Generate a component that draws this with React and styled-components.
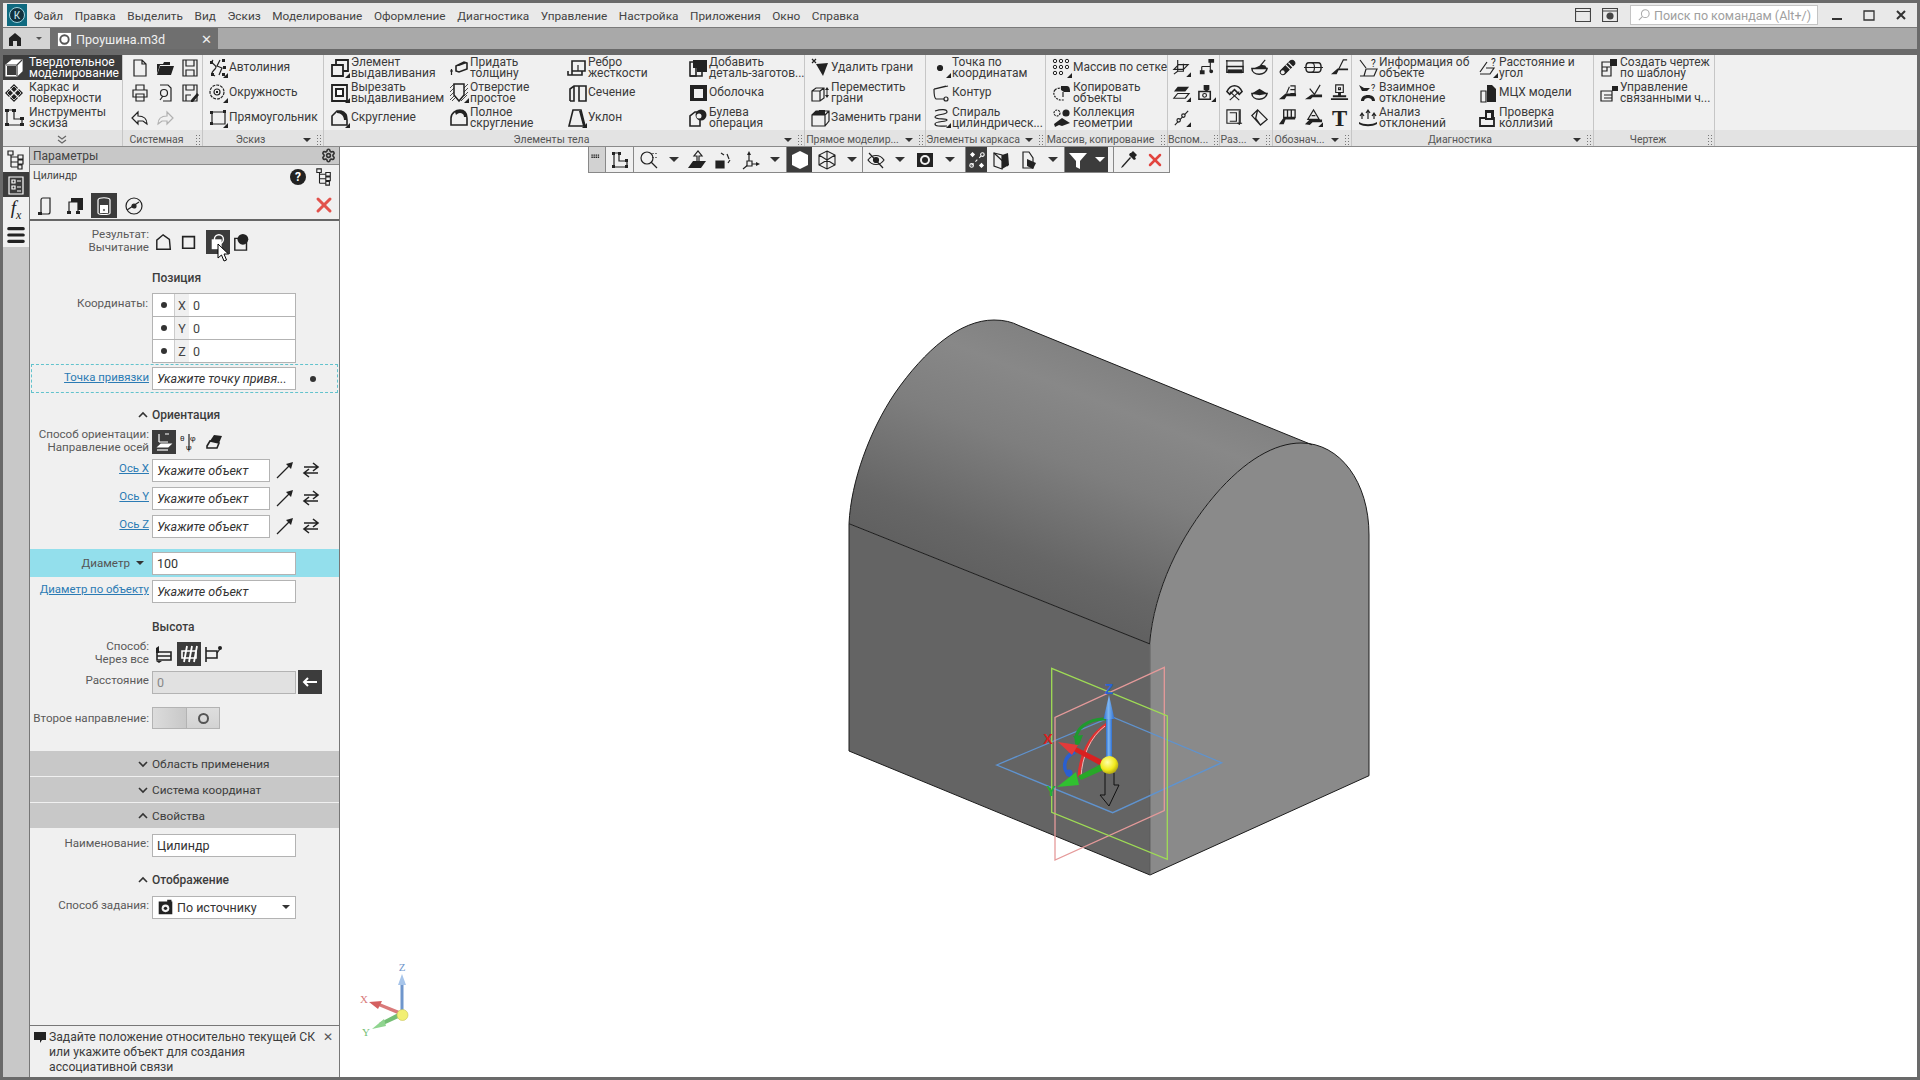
import React from "react";
import styled, { createGlobalStyle } from "styled-components";
import { Settings, X as XIcon } from "lucide-react";

const Global = createGlobalStyle`
  html, body { margin: 0; padding: 0; height: 100%; overflow: hidden; }
  body { font-family: Roboto, "Noto Sans", sans-serif; color: #333; }
`;

// --- icon pieces, everything lives in a 20x20 box
const F = ({ d }) => <path d={d} fill="currentColor" stroke="none" />;
const L = ({ d }) => <path d={d} />;
const C = () => <path d="M20 15v5h-5z" fill="currentColor" stroke="none" />;

const shapes = {
  cube: <><path d="M2 7l6-5h10v11l-5 5H2z" fill="#fff" stroke="#fff" /><path d="M2 7h11v11M13 7l5-5" stroke="#3c3c3c" /><path d="M3 8h9v9H3z" fill="#3c3c3c" stroke="none" /></>,
  frame: <><F d="M10 1l4 4-4 4-4-4zM5 6l4 4-4 4-4-4zM15 6l4 4-4 4-4-4zM10 11l4 4-4 4-4-4z" /><path d="M3 10l7-7 7 7-7 7z" stroke="#fff" strokeWidth=".7" /></>,
  sketchTools: <><L d="M3 2v15h15v-6h-8V2z" /><F d="M1 1h4v3H1zM8 1h4v3H8zM16 9h4v3h-4zM16 15h4v3h-4zM1 15h4v3H1z" /></>,
  doc: <L d="M4 2h8l4 4v12H4zM12 2v4h4" />,
  folder: <><F d="M2 6h6l1-2h6v3H5L2 16z" /><F d="M5 8h14l-3 9H2z" /></>,
  save: <><L d="M3 2h14v16H3zM6 2v6h8V2M6 18v-6h8v6" /></>,
  print: <L d="M6 7V2h8v5M3 7h14v7H3zM6 11h8v7H6z" />,
  preview: <><L d="M5 17l3-4M5 2h8l3 3v13H8" /><circle cx="9" cy="10" r="3.5" /></>,
  saveAs: <><L d="M3 2h14v16H3zM6 2v5h8V2M6 18v-6h5" /><F d="M11 17l6-7 2 2-6 7h-2z" /></>,
  undo: <L d="M8 4L2 10l6 6v-3h5l4 3c0-5-3-8-9-8z" />,
  redo: <g opacity=".3"><L d="M12 4l6 6-6 6v-3H7l-4 3c0-5 3-8 9-8z" /></g>,
  autoline: <><L d="M5 2c-4 4 6 5 2 9s-4 5 0 7M12 2l-3 6 5 2-3 7" /><F d="M2 3h3v3H2zM14 1h3v3h-3zM3 15h3v3H3zM15 8h3v3h-3zM14 15h3v3h-3z" /><C /></>,
  circle: <><circle cx="9" cy="9" r="7" strokeDasharray="3 1" /><circle cx="9" cy="9" r="3" /><F d="M8 8h2v2H8z" /><C /></>,
  rect: <><L d="M4 4h13v12H4z" /><F d="M2 3h3v3H2zM15 2h3v3h-3zM2 14h3v3H2z" /><C /></>,
  extrude: <><path d="M2 7h11v11H2z" strokeWidth="1.8" /><path d="M6 7V2h12v11h-5" strokeWidth="1.8" /><C /></>,
  cut: <><path d="M2 2h15v16H2z" strokeWidth="1.8" /><F d="M5 5h9v9H5z" /><path d="M7 7h5v5H7z" fill="#fff" stroke="none" /><C /></>,
  fillet: <><path d="M2 17V8l5-5h4c4 1 6 5 6 9v5z" strokeWidth="1.6" /><F d="M7 3h4c4 1 6 5 6 9h-3c0-4-3-7-7-7z" /><C /></>,
  thicken: <><L d="M1 13h3M2.500 11v6" /><path d="M7 8l8-4 3 1v6l-8 3-3-1z" strokeWidth="1.6" /><F d="M7 8l8-4 3 1-8 3z" /></>,
  hole: <><g strokeWidth=".8"><L d="M1 5l4-4M1 9l4-4M1 13l4-4M1 17l5-5M3 18l4-4M15 5l4-4M15 9l4-4M15 13l4-4M12 18l6-6" /></g><path d="M5 1h10v11l-5 6-5-6z" fill="#f0f0f0" strokeWidth="1.500" /><C /></>,
  fullFillet: <><path d="M2 17v-7c0-5 5-8 9-8 4 0 7 3 7 8v7z" strokeWidth="1.6" /><F d="M6 4c2-2 4-2 6-2 3 0 6 3 6 7h-3c0-3-2-4-4-4-2 0-3 1-4 2z" /></>,
  rib: <><path d="M5 3h13v10H5zM5 3v14H1V13M2 17h13v-4" strokeWidth="1.6" /><L d="M11 7v6" /></>,
  section: <path d="M3 18V6l4-3h12v15h-7V3M7 3v15H3" strokeWidth="1.6" />,
  draft: <><path d="M2 18L6 2h8l4 16z" strokeWidth="1.6" /><F d="M12 3h2l4 15h-2z" /><C /></>,
  addPart: <><path d="M2 18V4h6v14z" strokeWidth="1.6" /><F d="M5 2h14v12H9v-4H5z" /><path d="M2 18h12v-4" strokeWidth="1.6" /></>,
  shell: <><F d="M2 2h17v16H2z" /><path d="M6 6h9v9H6z" fill="#f0f0f0" stroke="none" /></>,
  bool: <><path d="M2 18V8l5-4h5v14z" strokeWidth="1.6" /><circle cx="13" cy="7" r="5.500" fill="currentColor" stroke="none" /><circle cx="11" cy="8" r="2.500" fill="#f0f0f0" stroke="none" /></>,
  delFace: <><F d="M6 6l12-1-5 13z" /><L d="M2 1l4 4M6 1L2 5" /></>,
  moveFace: <><path d="M2 8l4-3h8v10l-4 3H2zM2 8h8v10M10 8l4-3" /><F d="M17 4l2 3h-4zM17 15l-2-3h4zM16.500 7h1v5h-1z" /></>,
  replaceFace: <><path d="M2 7h13v11H2zM2 7l4-4h13v10l-4 5M15 7l4-4" /><F d="M2 7l4-4h4v4zM9 2h6v5H9z" /></>,
  point: <><circle cx="9" cy="10" r="2.500" fill="currentColor" /><C /></>,
  contour: <><L d="M3 6l12-3M3 6c0 4 0 9 2 10h8M4 6l13-3" /><circle cx="15" cy="16" r="2" /></>,
  spiral: <><L d="M4 3c6-2 12-2 12 1S4 6 4 9s12 1 12 3-12 1-12 4 8 2 12 2" strokeWidth="1.5" /><C /></>,
  grid: <><g strokeWidth="1"><circle cx="3" cy="3" r="1.700" /><circle cx="9" cy="3" r="1.700" /><circle cx="15" cy="3" r="1.700" /><circle cx="3" cy="9" r="1.700" /><circle cx="9" cy="9" r="1.700" /><circle cx="15" cy="9" r="1.700" /><circle cx="3" cy="15" r="1.700" /><circle cx="9" cy="15" r="1.700" /></g><C /></>,
  copyObj: <><path d="M3 7c-3 3 0 9 5 10h4M3 7c2-2 5-2 6-2" strokeDasharray="2 1" /><F d="M9 3h6c3 0 3 4 3 6h-6l-3-2z" /><L d="M11 9v5" /></>,
  collect: <><circle cx="5" cy="5" r="3" strokeDasharray="2 1" /><circle cx="14" cy="5" r="3" fill="currentColor" /><F d="M2 16l8-6 8 5-8 3-3-1-4 2z" /></>,
  plane: <><L d="M2 12l5-5h10l-5 5zM6 2v12h6V6M2 17l4-3" /><C /></>,
  sym: <><L d="M14 4v10M5 9h9M5 9v5" /><F d="M12 1h6v4h-6zM3 13h5v4H3zM13 14a2 2 0 104 0 2 2 0 10-4 0" /></>,
  plane2: <><F d="M6 4h12l-4 5H2z" /><L d="M2 16l4-5h12l-4 5z" /><C /></>,
  sym2: <><path d="M2 9h12v8H2z" strokeWidth="1.6" /><circle cx="8" cy="13" r="2" /><F d="M7 2h6v5l-3 2-3-2z" /><C /></>,
  axis: <><L d="M3 18L17 3" /><circle cx="7" cy="13" r="1.800" fill="#f0f0f0" /><circle cx="12" cy="8" r="1.800" fill="#f0f0f0" /><C /></>,
  bracket: <><path d="M2 9h17v6H2z" strokeWidth="1.6" /><F d="M3 12h15v4H3z" /><L d="M2 2v7M19 2v7M1 3h18" /></>,
  bowl: <><path d="M2 11c0 8 15 8 16 0z" strokeWidth="1.6" /><F d="M4 11h14l-2-3-4-1z" /><L d="M11 8l5-6" /></>,
  faces: <><path d="M2 9c4-8 12-8 16 0l-3 3-5-5-5 5z" strokeWidth="1.600" /><L d="M5 9l10 9M15 9L5 18" /></>,
  bowl2: <><path d="M2 11c0 8 15 8 16 0z" strokeWidth="1.6" /><F d="M2 11l8-5 8 5-8 2z" /></>,
  tri: <><L d="M2 2h14v14H2z" /><L d="M5 5h7v9H5M15 3v15M13 16h5" /></>,
  fold: <><path d="M8 2L2 8l9 10 7-6zM8 2l-2 9 5 7" strokeWidth="1.400" /></>,
  pipe: <><path d="M3 13L13 3c3-2 6 2 4 4L7 17c-3 2-6-2-4-4z" fill="currentColor" /><circle cx="5" cy="15" r="2" fill="#f0f0f0" stroke="none" /><path d="M8 7l6 6M11 5l5 5" stroke="#f0f0f0" /></>,
  cyl: <><path d="M5 5h10c2 0 3 2 3 5s-1 5-3 5H5c-2 0-3-2-3-5s1-5 3-5z" strokeWidth="1.500" /><L d="M0 10h20M8 5c2 0 3 2 3 5s-1 5-3 5" /></>,
  weld: <><F d="M1 17l7-6h11v2H9l-2 4z" /><L d="M9 12l5-10h4" /></>,
  weldE: <><F d="M1 17l7-6h11v3H9l-2 3z" /><L d="M9 11l3-7M13 3h5v8h-5M13 7h5" /></>,
  check: <><F d="M1 17l7-5h11v3H9l-2 2z" /><L d="M6 6l5 6 6-10" /></>,
  stamp: <><path d="M6 2h8v8H6z" /><F d="M3 13h14v2H3zM1 16h18v2H1zM8.500 10h3v3h-3z" /><L d="M9 5h2v2H9z" /></>,
  base: <><path d="M6 2h12v8H6zM10 2v8M14 2v8" strokeWidth="1.400" /><F d="M1 17l5-7h12v2H8l-2 5z" /></>,
  tol: <><L d="M10 2l6 10H4zM8 8h4" /><F d="M1 17l5-5h13v3H9l-3 3z" /><C /></>,
  bigT: <text x="10" y="18.500" textAnchor="middle" fontFamily="Liberation Serif" fontWeight="700" fontSize="24" fill="currentColor" stroke="none">T</text>,
  info: <><L d="M2 2l6 8M2 18h14l3-7H8l-2 7" /><text x="13" y="9" fontSize="10" fill="currentColor" stroke="none">?</text></>,
  dist: <><L d="M2 14l7-10M2 16h10l4-6H8" /><text x="13" y="8" fontSize="10" fill="currentColor" stroke="none">?</text><C /></>,
  mutual: <><F d="M1 2l5 3h6l-3 3H4zM3 18c0-4 3-6 7-6s7 2 7 6h-3c0-2-2-3-4-3s-4 1-4 3z" /><text x="13" y="8" fontSize="9" fill="currentColor" stroke="none">?</text></>,
  mch: <><F d="M9 2h5l4 4v13H9z" /><L d="M3 8h5v11H3z" /></>,
  analysis: <><L d="M4 5v6M10 2v9M16 5v6M2 8l2-3 2 3M8 5l2-3 2 3M14 8l2-3 2 3" /><F d="M1 14c5 3 13 3 18 0v2c-5 3-13 3-18 0z" /></>,
  collide: <><path d="M2 10h14v8H2z" strokeWidth="1.8" /><F d="M7 2h9v10H7z" /><path d="M9 5h4v5H9z" fill="#f0f0f0" stroke="none" /></>,
  template: <><L d="M3 4h9v14H3zM3 9h5v4H3zM11 9H7" /><F d="M11 1h7v7h-7z" /></>,
  linked: <><L d="M2 8h11v10H2zM5 12h8M5 15h8" /><F d="M13 3h6v5h-6z" /></>,
  tree: <><L d="M5 3v14M5 7h7M5 12h7M5 17h7" /><path d="M2 1h5v4H2zM12 5h5v4h-5zM12 10h5v4h-5zM12 15h4v4h-4z" fill="#f0f0f0" /></>,
  params: <><path d="M3 2h14v17H3z" fill="none" /><path d="M6 5h3v3H6zM6 11h3v3H6zM11 6h4M11 12h4M11 16h4" /></>,
  tabA: <><L d="M6 17V4c0-2 2-2 2-2h7v14c0 1-1 2-2 2H5" /><F d="M3 16h4v3H3z" /></>,
  tabB: <><L d="M4 16V6h9v10" /><F d="M6 2h12v12h-5V6H6zM2 15h4v3H2zM11 15h4v3h-4z" /></>,
  tabC: <><path d="M4 4c0-3 12-3 12 0v13c0 2-12 2-12 0z" /><path d="M6 9h8v8H6z" fill="currentColor" stroke="none" /><circle cx="10" cy="14" r="1.500" fill="#3c3c3c" /></>,
  tabD: <><circle cx="10" cy="10" r="8" /><L d="M3 14L15 6" /><circle cx="10" cy="10" r="2" fill="currentColor" /></>,
  resA: <path d="M2 18V8l7-6 7 5 1 11z" strokeWidth="1.600" />,
  resB: <path d="M3 4h13v13H3z" strokeWidth="1.800" />,
  resC: <><path d="M3 7h11v11H3z" fill="currentColor" stroke="none" /><circle cx="11" cy="7" r="5" strokeWidth="1.600" /></>,
  resD: <><path d="M2 6h13v13H2z" strokeWidth="1.600" /><circle cx="11" cy="7" r="6" fill="currentColor" stroke="none" /></>,
  orientA: <><L d="M5 2v8M5 10h9M11 2h4" /><path d="M4 15l3-3h10l-3 3z" fill="currentColor" /><L d="M3 18h11" /></>,
  orientB: <><text x="1" y="9" fontSize="8" fill="currentColor" stroke="none">θ</text><text x="11" y="9" fontSize="8" fill="currentColor" stroke="none">φ</text><L d="M10 2v16" /><text x="7" y="18" fontSize="8" fill="currentColor" stroke="none">ψ</text></>,
  eraser: <><F d="M10 3l8 1-3 7-9-2z" /><path d="M3 14l3-5 9 2-2 5H3z" strokeWidth="1.600" /></>,
  arrowUp: <><L d="M2 18L16 4" /><F d="M18 2l-2 7-5-5z" /></>,
  swap: <path d="M3 7h14M12 3l5 4-5 4M17 13H3M8 9l-5 4 5 4" strokeWidth="1.600" />,
  byA: <><path d="M3 8h14v8H3zM3 12h14" strokeWidth="1.600" /><F d="M2 4l3-2v7H2zM2 17h6l-3 2z" /></>,
  byB: <><path d="M3 7h14v7H3z" strokeWidth="1.600" /><path d="M5 18L8 2M10 18l3-16M15 18l3-16" strokeWidth="1.800" /></>,
  byC: <><path d="M2 7h11v7H2zM2 18V3" strokeWidth="1.600" /><circle cx="16" cy="4" r="2" fill="currentColor" stroke="none" /><L d="M13 9l3-4" /></>,
  source: <><F d="M2 3h16v15H2zM12 1h5v2h-5z" /><circle cx="10" cy="11" r="4.500" fill="#f0f0f0" stroke="none" /><circle cx="10" cy="11" r="2" fill="#222" stroke="none" /></>,
  grip: <F d="M2 2h2v2H2zM5 2h2v2H5zM8 2h2v2H8zM11 2h2v2h-2zM2 5h2v2H2zM5 5h2v2H5zM8 5h2v2H8zM11 5h2v2h-2z" />,
  sketch: <><L d="M4 3v14h13v-6H9V3z" /><F d="M2 2h3v3H2zM8 2h3v3H8zM15 9h3v3h-3zM2 15h3v3H2zM15 15h3v3h-3z" /></>,
  zoomQ: <><circle cx="8" cy="8" r="6" /><L d="M12 12l6 6" /><L d="M14 3v1M17 3v1M14 7v1M17 7v1" /></>,
  normal: <><F d="M1 18l5-7h13l-5 7z" /><path d="M10 11V6H7l4-5 4 5h-3v5" fill="#f0f0f0" /></>,
  rotate: <><path d="M3 11h8v7H3z" fill="currentColor" /><L d="M8 3l3 2M14 4l2 5M17 10l-2 3" strokeDasharray="2 1" /></>,
  triad: <><L d="M9 14V3M9 14h9M9 14l-6 5" /><F d="M7 5l2-4 2 4zM16 12l4 2-4 2z" /><path d="M7 11h5v5H7z" fill="#f0f0f0" /></>,
  shaded: <><F d="M10 1l8 4v10l-8 4-8-4V5z" /><path d="M10 2l7 3.500-7 3.500-7-3.500zM2.700 6l6.800 3.500v8.500l-6.800-3.400z" fill="#fff" stroke="none" /><path d="M10.500 9.500L17.300 6v8.600L10.500 18z" fill="#fff" opacity=".75" stroke="none" /></>,
  wire: <path d="M10 1l8 4v10l-8 4-8-4V5zM2 5l16 10M18 5L2 15M10 1v18" strokeWidth="1.100" />,
  hide: <><path d="M2 10c4-6 12-6 16 0-4 6-12 6-16 0z" /><circle cx="10" cy="10" r="2.500" fill="currentColor" /><L d="M3 3l14 15" strokeWidth="1.500" /></>,
  camera: <><F d="M2 3h16v14H2z" /><circle cx="10" cy="10" r="5" fill="#f0f0f0" stroke="none" /><circle cx="10" cy="10" r="3" fill="currentColor" stroke="none" /></>,
  snap: <><path d="M4 16L16 4" strokeDasharray="3 3" /><circle cx="4" cy="16" r="2" /><circle cx="16" cy="4" r="2" /><path d="M3 4l2-2 2 2-2 2zM13 16l2-2 2 2-2 2z" fill="currentColor" /></>,
  cubeSel: <><path d="M3 3l8 2v14l-8-3z" /><F d="M11 5l6-2 1 12-7 4z" /><L d="M3 3l14 13" /></>,
  cubeDoc: <><path d="M4 2h6l4 6v10H4z" /><F d="M8 9l9 4-3 6-6-3z" /></>,
  filter: <path d="M1 3h18l-7 8v8l-4-2v-6z" fill="currentColor" stroke="none" />,
  pipette: <><F d="M12 7l1 1-8 9-2 1 1-2z" /><F d="M13 3l2-2 4 4-2 2 1 2-2 1-5-5 1-2z" /></>,
};

const Svg = styled.svg`
  display: block;
  flex: none;
  fill: none;
  stroke: currentColor;
  stroke-width: 1.2;
  color: ${(p) => p.$color || "#222"};
`;

const Ico = ({ n, size = 20, color }) => (
  <Svg viewBox="0 0 20 20" width={size} height={size} $color={color}>
    {shapes[n]}
  </Svg>
);

// --- top of the window
const Window = styled.div`
  width: 1920px;
  height: 1080px;
  box-sizing: border-box;
  padding: 3px 3px;
  background: #6a6a6a;
  display: flex;
  flex-direction: column;
  overflow: hidden;
`;

const MenuBar = styled.div`
  height: 25px;
  flex: none;
  display: flex;
  align-items: center;
  background: #e9e9e9;
  border-bottom: 1px solid #7a7a7a;
  box-sizing: border-box;
`;

const Logo = styled.svg`
  margin-left: 4px;
  width: 20px;
  height: 22px;
  flex: none;
`;

const MenuList = styled.div`
  display: flex;
  gap: 11.6px;
  margin-left: 7px;
  padding-top: 2px;
  flex: 1;
`;

const MenuItem = styled.span`
  font-size: 11.8px;
  color: #444;
  white-space: nowrap;
`;

const SearchBox = styled.div`
  width: 188px;
  height: 20px;
  box-sizing: border-box;
  margin-left: 12px;
  margin-right: 3px;
  background: #fff;
  border: 1px solid #c4c4c4;
  color: #a0a0a0;
  font-size: 12.5px;
  display: flex;
  align-items: center;
  gap: 4px;
  padding-left: 7px;
`;

const WinBtn = styled.div`
  width: 32px;
  display: flex;
  justify-content: center;
  align-items: center;
  height: 20px;
`;

const TabBar = styled.div`
  height: 21px;
  flex: none;
  display: flex;
  background: #a9a9a9;
`;

const HomeBtn = styled.div`
  width: 47px;
  background: #d4d4d4;
  display: flex;
  align-items: center;
  gap: 14px;
  padding-left: 5px;
  box-sizing: border-box;
`;

const Caret = styled.span`
  display: inline-block;
  flex: none;
  width: 0;
  height: 0;
  border-left: ${(p) => p.$s || 4}px solid transparent;
  border-right: ${(p) => p.$s || 4}px solid transparent;
  border-top: ${(p) => p.$s || 4}px solid ${(p) => p.$c || "#333"};
`;

const DocTab = styled.div`
  width: 168px;
  background: #6f6f6f;
  color: #f0f0f0;
  font-size: 12.6px;
  display: flex;
  align-items: center;
  box-sizing: border-box;
  padding: 2px 6px 0 7px;
  gap: 4px;
`;

const TabClose = styled.span`
  margin-left: auto;
  color: #eee;
  font-size: 13px;
`;

const DarkGap = styled.div`
  height: 6px;
  flex: none;
`;

// --- ribbon
const Ribbon = styled.div`
  height: 92px;
  flex: none;
  display: flex;
  background: #f0f0f0;
  border-bottom: 1px solid #8a8a8a;
  box-sizing: border-box;
`;

const Group = styled.div`
  width: ${(p) => p.$w}px;
  flex: none;
  display: flex;
  flex-direction: column;
  border-right: 1px solid #c6c6c6;
  box-sizing: border-box;
`;

const FillGroup = styled(Group)`
  flex: 1;
  width: auto;
  border-right: none;
`;

const GroupBody = styled.div`
  height: 75px;
  flex: none;
  display: flex;
  padding-left: ${(p) => p.$pad || 0}px;
  box-sizing: border-box;
`;

const GroupFoot = styled.div`
  flex: 1;
  background: #e3e3e3;
  display: flex;
  align-items: center;
  padding: 3px 2px 0 0;
  gap: 5px;
  min-width: 0;
`;

const Caption = styled.span`
  flex: 1;
  text-align: center;
  font-size: 10.5px;
  color: #555;
  white-space: nowrap;
`;

const Grip = styled.span`
  width: 5px;
  height: 11px;
  flex: none;
  background-image: radial-gradient(#777 0.8px, transparent 1px);
  background-size: 3px 3px;
`;

const ToolCol = styled.div`
  width: ${(p) => p.$w}px;
  flex: none;
  display: flex;
  flex-direction: column;
`;

const Tool = styled.div`
  height: 25px;
  display: flex;
  align-items: center;
  font-size: 12px;
  line-height: 11.5px;
  color: #3a3a3a;
  white-space: pre;
  span {
    padding-top: 1px;
  }
`;

const ToolIcon = styled.div`
  width: 22px;
  flex: none;
  display: flex;
  justify-content: center;
`;

const IconGrid = styled.div`
  display: grid;
  grid-template-columns: repeat(${(p) => p.$cols}, ${(p) => p.$cell}px);
  grid-auto-rows: 25px;
  justify-items: center;
  align-items: center;
`;

const Mode = styled.div`
  height: 25px;
  display: flex;
  align-items: center;
  background: ${(p) => (p.$active ? "#3c3c3c" : "transparent")};
  color: ${(p) => (p.$active ? "#fff" : "#3a3a3a")};
  font-size: 12px;
  line-height: 11.5px;
  white-space: pre;
  gap: 5px;
  padding: 1px 0 0 1px;
  box-sizing: border-box;
`;

const Modes = styled.div`
  flex: 1;
`;

const ChevronFoot = styled.div`
  flex: 1;
  display: flex;
  justify-content: center;
`;

const ToolGroup = ({ w, pad, caption, caret, cols }) => (
  <Group $w={w}>
    <GroupBody $pad={pad}>
      {cols.map((col, i) => (
        <ToolCol key={i} $w={col.w}>
          {col.items.map(([icon, text], j) => (
            <Tool key={j}>
              <ToolIcon>
                <Ico n={icon} />
              </ToolIcon>
              <span>{text}</span>
            </Tool>
          ))}
        </ToolCol>
      ))}
    </GroupBody>
    <GroupFoot>
      <Caption>{caption}</Caption>
      {caret && <Caret />}
      <Grip />
    </GroupFoot>
  </Group>
);

const GridGroup = ({ w, pad, caption, caret, cell, cols, icons, size }) => (
  <Group $w={w}>
    <GroupBody $pad={pad}>
      <IconGrid $cols={cols} $cell={cell}>
        {icons.map((n, i) => (
          <Ico key={i} n={n} size={size || 20} />
        ))}
      </IconGrid>
    </GroupBody>
    <GroupFoot>
      <Caption>{caption}</Caption>
      {caret && <Caret />}
      <Grip />
    </GroupFoot>
  </Group>
);

// --- left rail and properties panel
const Main = styled.div`
  flex: 1;
  min-height: 0;
  display: flex;
`;

const Rail = styled.div`
  width: 26px;
  flex: none;
  background: #c8c8c8;
`;

const RailBtn = styled.div`
  height: 25px;
  display: flex;
  align-items: center;
  justify-content: center;
  background: ${(p) => (p.$active ? "#3c3c3c" : "#f0f0f0")};
`;

const Fx = styled.span`
  font-family: "Liberation Serif", serif;
  font-style: italic;
  font-size: 19px;
  color: #222;
`;

const Panel = styled.div`
  width: 311px;
  flex: none;
  display: flex;
  flex-direction: column;
  background: #f0f0f0;
  border-left: 1px solid #777;
  border-right: 1px solid #777;
  box-sizing: border-box;
  position: relative;
`;

const PanelHead = styled.div`
  height: 17px;
  flex: none;
  background: #c8c8c8;
  border-bottom: 1px solid #8a8a8a;
  display: flex;
  align-items: center;
  justify-content: space-between;
  padding: 0 3px 0 3px;
  font-size: 12px;
  color: #444;
`;

const TitleRow = styled.div`
  height: 28px;
  flex: none;
  display: flex;
  justify-content: space-between;
  padding: 0 6px 0 3px;
  font-size: 10.5px;
  color: #444;
  align-items: flex-start;
  line-height: 21px;
`;

const HelpWrap = styled.div`
  display: flex;
  align-items: center;
  gap: 9px;
  padding-top: 3px;
`;

const Help = styled.span`
  width: 16px;
  height: 16px;
  border-radius: 50%;
  background: #222;
  color: #fff;
  font-size: 12px;
  font-weight: 700;
  line-height: 16px;
  text-align: center;
`;

const TabsRow = styled.div`
  height: 28px;
  flex: none;
  display: flex;
  align-items: flex-start;
  border-bottom: 2px solid #666;
  box-sizing: border-box;
  padding: 0 3px 0 2px;
`;

const PanelTab = styled.div`
  width: 26px;
  height: 25px;
  margin-right: 3.5px;
  display: flex;
  align-items: center;
  justify-content: center;
  background: ${(p) => (p.$active ? "#3c3c3c" : "transparent")};
`;

const Row = styled.div`
  display: flex;
  align-items: center;
  gap: 3px;
  height: ${(p) => p.$h || 24}px;
  margin-top: ${(p) => p.$mt || 0}px;
  flex: none;
`;

const Label = styled.div`
  width: 119px;
  flex: none;
  text-align: right;
  font-size: 11.6px;
  line-height: 12.5px;
  color: #5a5a5a;
  white-space: pre;
  margin-top: ${(p) => (p.$up ? -3 : 0)}px;
`;

const LinkLabel = styled(Label)`
  font-size: 11.4px;
  color: #2b7bb4;
  text-decoration: underline;
  margin-top: -3px;
`;

const Field = styled.div`
  width: ${(p) => p.$w || 144}px;
  height: 23px;
  flex: none;
  box-sizing: border-box;
  background: ${(p) => (p.$off ? "#e1e1e1" : "#fff")};
  border: 1px solid #b3b3b3;
  display: flex;
  align-items: center;
  padding-left: 4px;
  font-size: 12.5px;
  font-style: ${(p) => (p.$hint ? "italic" : "normal")};
  color: ${(p) => (p.$off ? "#888" : "#333")};
  white-space: nowrap;
  overflow: hidden;
`;

const SelectField = styled(Field)`
  padding-right: 5px;
  gap: 3px;
`;

const Title = styled.div`
  height: 18px;
  flex: none;
  margin-top: ${(p) => p.$mt || 0}px;
  padding-left: ${(p) => (p.$chev ? 108 : 122)}px;
  display: flex;
  align-items: center;
  gap: 4px;
  font-size: 12px;
  font-weight: 500;
  color: #3c3c3c;
`;

const Bar = styled(Title)`
  height: 25px;
  background: #c8c8c8;
  margin-bottom: 1px;
  font-size: 11.8px;
  font-weight: 400;
`;

const Chev = styled.svg`
  width: 10px;
  height: 8px;
  flex: none;
  fill: none;
  stroke: #333;
  stroke-width: 1.6;
`;

const Chevron = ({ down }) => (
  <Chev viewBox="0 0 10 8">
    <path d={down ? "M1 2l4 4 4-4" : "M1 6l4-4 4 4"} />
  </Chev>
);

const Slot = styled.div`
  width: 24px;
  height: 24px;
  flex: none;
  display: flex;
  align-items: center;
  justify-content: center;
  margin-right: ${(p) => p.$mr ?? -2}px;
  position: relative;
  background: ${(p) => (p.$active ? "#3c3c3c" : "transparent")};
`;

const Cursor = styled.svg`
  position: absolute;
  left: 11px;
  top: 13px;
  width: 12px;
  height: 19px;
`;

const CoordTable = styled.div`
  margin-top: 6px;
  margin-left: 122px;
  width: 144px;
  border: 1px solid #b3b3b3;
  border-bottom: none;
  box-sizing: border-box;
  flex: none;
  position: relative;
`;

const CoordLabel = styled.div`
  position: absolute;
  right: 147px;
  top: 2px;
  font-size: 11.6px;
  color: #5a5a5a;
  white-space: nowrap;
`;

const CoordRow = styled.div`
  height: 23px;
  display: flex;
  border-bottom: 1px solid #b3b3b3;
  box-sizing: border-box;
  background: #fff;
  font-size: 12.5px;
  color: #444;
`;

const CoordDot = styled.div`
  width: 21px;
  border-right: 1px solid #ccc;
  display: flex;
  align-items: center;
  justify-content: center;
  &::before {
    content: "";
    width: 6px;
    height: 6px;
    border-radius: 50%;
    background: #333;
  }
`;

const CoordAxis = styled.div`
  width: 14px;
  background: #f0f0f0;
  display: flex;
  align-items: center;
  justify-content: center;
`;

const CoordVal = styled.div`
  padding-left: 4px;
  display: flex;
  align-items: center;
`;

const DashBox = styled.div`
  margin: 1px 1px 0 1px;
  height: 29px;
  flex: none;
  display: flex;
  align-items: center;
  gap: 3px;
  border: 1px dashed #62c3cd;
  box-sizing: border-box;
  margin-right: 1px;
`;

const Dot = styled.span`
  width: 6px;
  height: 6px;
  border-radius: 50%;
  background: #333;
  margin-left: 11px;
`;

const Band = styled.div`
  margin-top: 11px;
  height: 28px;
  flex: none;
  background: #93dfec;
  display: flex;
  align-items: center;
  gap: 3px;
`;

const BandLabel = styled.div`
  width: 119px;
  display: flex;
  justify-content: flex-end;
  align-items: center;
  gap: 6px;
  padding-right: 5px;
  box-sizing: border-box;
  font-size: 11.6px;
  color: #555;
`;

const BackBtn = styled.div`
  width: 24px;
  height: 24px;
  background: #3c3c3c;
  display: flex;
  align-items: center;
  justify-content: center;
  margin-left: -1px;
`;

const Toggle = styled.div`
  width: 68px;
  height: 22px;
  display: flex;
  border: 1px solid #b3b3b3;
  box-sizing: border-box;
  background: linear-gradient(#dedede, #d3d3d3);
`;

const ToggleOff = styled.div`
  width: 33px;
  border-right: 1px solid #b3b3b3;
  background: linear-gradient(90deg, #dcdcdc, #c8c8c8);
`;

const ToggleKnob = styled.div`
  flex: 1;
  display: flex;
  align-items: center;
  justify-content: center;
  &::before {
    content: "";
    width: 7px;
    height: 7px;
    border-radius: 50%;
    border: 2px solid #555;
  }
`;

const Hint = styled.div`
  margin-top: auto;
  height: 52px;
  flex: none;
  border-top: 1px solid #777;
  box-sizing: border-box;
  display: flex;
  padding: 4px 4px 0 4px;
  gap: 2px;
  font-size: 12.2px;
  line-height: 15px;
  color: #3c3c3c;
  span {
    white-space: nowrap;
  }
`;

const HintClose = styled.i`
  margin-left: auto;
  margin-right: 2px;
  color: #555;
  font-style: normal;
`;

const HelpBubble = styled.svg`
  width: 13px;
  height: 13px;
  flex: none;
  margin-top: 1px;
`;

// --- model view
const Canvas = styled.div`
  flex: 1;
  position: relative;
  background: #fff;
  overflow: hidden;
`;

const Toolbar = styled.div`
  position: absolute;
  left: 248px;
  top: 0;
  height: 26px;
  display: flex;
  background: #f0f0f0;
  border: 1px solid #888;
  border-top: none;
  box-sizing: border-box;
  z-index: 2;
`;

const TbSection = styled.div`
  display: flex;
  border-right: 1px solid #888;
  width: ${(p) => p.$w}px;
  box-sizing: border-box;
  background: ${(p) => p.$bg || "transparent"};
  &:last-child {
    border-right: none;
  }
`;

const TbBtn = styled.div`
  width: ${(p) => p.$w}px;
  flex: none;
  display: flex;
  align-items: center;
  justify-content: center;
  background: ${(p) => (p.$active ? "#3c3c3c" : "transparent")};
`;

const ModelSvg = styled.svg`
  position: absolute;
  left: 0;
  top: 0;
  width: 1577px;
  height: 930px;
`;

const ribbonRows = {
  sketch: [["autoline", "Автолиния"], ["circle", "Окружность"], ["rect", "Прямоугольник"]],
};

const backArch = "M849 523.700C851 481 870 430 895 393C925 350 960 320 994 320C1004 320 1012 322 1019 325.600L1312 444.800";
const frontArch = "M1149.600 644C1154 590 1180 536 1215 495C1245 460 1275 443 1301 443C1340 443 1369 482 1369 535";

const Model = () => (
  <ModelSvg viewBox="340 147 1577 930">
    <defs>
      <linearGradient id="roof" gradientUnits="userSpaceOnUse" x1="990" y1="600" x2="1105" y2="310">
        <stop offset="0" stopColor="#5e5e5e" />
        <stop offset="0.18" stopColor="#666" />
        <stop offset="0.5" stopColor="#7e7e7e" />
        <stop offset="0.72" stopColor="#888" />
        <stop offset="1" stopColor="#7a7a7a" />
      </linearGradient>
      <radialGradient id="ball" cx="0.4" cy="0.35" r="0.7">
        <stop offset="0" stopColor="#ffffa8" />
        <stop offset="0.6" stopColor="#f2ea1c" />
        <stop offset="1" stopColor="#a89c10" />
      </radialGradient>
      <linearGradient id="zBar" x1="0" x2="1" y1="0" y2="0">
        <stop offset="0" stopColor="#2f6fd0" />
        <stop offset="0.45" stopColor="#7db6f2" />
        <stop offset="1" stopColor="#2f6fd0" />
      </linearGradient>
    </defs>

    <path d="M849 523.700V751L1150 875V644z" fill="#646464" />
    <path d={backArch + "C1275 443 1245 460 1215 495C1180 536 1154 590 1149.600 644z"} fill="url(#roof)" />
    <path d={frontArch + "V775.700L1150 875z"} fill="#8a8a8a" />
    <g fill="none" stroke="#1c1c1c" strokeWidth="1">
      <path d={backArch} />
      <path d="M849 523.700V751L1150 875L1369 775.700V535" />
      <path d="M849 523.700L1150 644" />
      <path d={frontArch} />
    </g>
    <path d="M1150 644V875" stroke="#555" strokeWidth=".8" />

    {/* construction planes */}
    <g fill="none" strokeWidth="1.300">
      <path d="M996.700 765L1111.700 716.700L1221.700 762.700L1112.700 812.700z" stroke="#5f93cf" />
      <path d="M1164.300 667.300L1055 717.300V860L1164.300 810.700z" stroke="#e59a9a" />
      <path d="M1051.700 668.300L1167.300 716V859.300L1051.700 812.300z" stroke="#9fdc55" />
    </g>

    {/* manipulator */}
    <path d="M1105 773V795H1100L1109 806L1119 785H1114V773" fill="none" stroke="#111" strokeWidth="1" />
    <path d="M1106 719C1090 718 1072 728 1077 745" fill="none" stroke="#1f9a2f" strokeWidth="3" />
    <path d="M1079 745l-6-9 10-1z" fill="#1f9a2f" />
    <path d="M1107 724C1090 735 1080 755 1079 777" fill="none" stroke="#e03030" strokeWidth="3" />
    <path d="M1105 726C1090 737 1082 757 1081 777" fill="none" stroke="#f5b5b5" strokeWidth="1" />
    <path d="M1075 752C1062 757 1062 772 1071 776" fill="none" stroke="#2a5fd0" strokeWidth="3.500" />
    <circle cx="1069" cy="773" r="3.500" fill="#2a5fd0" />
    <rect x="1106" y="718" width="6" height="40" fill="url(#zBar)" />
    <path d="M1109 695L1103.500 719H1114.500z" fill="url(#zBar)" />
    <path d="M1105 768L1072 750L1074 746L1108 763z" fill="#d92020" />
    <path d="M1058 742L1078 745L1072 755z" fill="#e23a3a" />
    <path d="M1105 762L1078 776L1081 780L1108 768z" fill="#28a828" />
    <path d="M1057 787L1076 772L1079 785z" fill="#30c030" />
    <circle cx="1109.300" cy="765" r="9" fill="url(#ball)" />
    <text x="1109" y="694" textAnchor="middle" fontFamily="Liberation Sans" fontWeight="700" fontSize="14" fill="#2a62d6">Z</text>
    <text x="1048" y="744" textAnchor="middle" fontFamily="Liberation Sans" fontWeight="700" fontSize="14" fill="#d92020">X</text>
    <text x="1051" y="796" textAnchor="middle" fontFamily="Liberation Sans" fontWeight="700" fontSize="14" fill="#20b030">Y</text>

    {/* small triad bottom left */}
    <rect x="400.500" y="983" width="3" height="30" fill="#6f96cc" />
    <path d="M402 974L398 985H406z" fill="#a7c5ea" />
    <path d="M400 1015L376 1005L377 1002L402 1012z" fill="#d97a7a" />
    <path d="M369 1002L382 1001L378 1009z" fill="#d46060" />
    <path d="M400 1012L379 1023L381 1026L403 1016z" fill="#74be74" />
    <path d="M372 1029L384 1019L386 1026z" fill="#8fd48f" />
    <circle cx="402.500" cy="1015" r="5.500" fill="#f2ef72" stroke="#c8c25a" strokeWidth=".6" />
    <text x="402" y="971" textAnchor="middle" fontFamily="Liberation Serif" fontSize="11" fill="#6f96cc">Z</text>
    <text x="364" y="1003" textAnchor="middle" fontFamily="Liberation Serif" fontSize="11" fill="#d97a7a">X</text>
    <text x="366" y="1036" textAnchor="middle" fontFamily="Liberation Serif" fontSize="11" fill="#74be74">Y</text>
  </ModelSvg>
);

const ViewBar = () => (
  <Toolbar>
    <TbSection $w={17} $bg="#d2d2d2"><TbBtn $w={16}><Ico n="grip" size={14} /></TbBtn></TbSection>
    <TbSection $w={28}><TbBtn $w={27}><Ico n="sketch" /></TbBtn></TbSection>
    <TbSection $w={153}>
      <TbBtn $w={30}><Ico n="zoomQ" /></TbBtn>
      <TbBtn $w={20}><Caret $s={5} /></TbBtn>
      <TbBtn $w={25}><Ico n="normal" /></TbBtn>
      <TbBtn $w={27}><Ico n="rotate" /></TbBtn>
      <TbBtn $w={27}><Ico n="triad" /></TbBtn>
      <TbBtn $w={23}><Caret $s={5} /></TbBtn>
    </TbSection>
    <TbSection $w={76}>
      <TbBtn $w={25} $active><Ico n="shaded" color="#fff" /></TbBtn>
      <TbBtn $w={30}><Ico n="wire" /></TbBtn>
      <TbBtn $w={20}><Caret $s={5} /></TbBtn>
    </TbSection>
    <TbSection $w={103}>
      <TbBtn $w={26}><Ico n="hide" /></TbBtn>
      <TbBtn $w={22}><Caret $s={5} /></TbBtn>
      <TbBtn $w={28}><Ico n="camera" /></TbBtn>
      <TbBtn $w={22}><Caret $s={5} /></TbBtn>
    </TbSection>
    <TbSection $w={99}>
      <TbBtn $w={21} $active><Ico n="snap" color="#fff" size={18} /></TbBtn>
      <TbBtn $w={28}><Ico n="cubeSel" /></TbBtn>
      <TbBtn $w={27}><Ico n="cubeDoc" /></TbBtn>
      <TbBtn $w={22}><Caret $s={5} /></TbBtn>
    </TbSection>
    <TbSection $w={49}>
      <TbBtn $w={26} $active><Ico n="filter" color="#fff" /></TbBtn>
      <TbBtn $w={17} $active><Caret $s={5} $c="#fff" /></TbBtn>
    </TbSection>
    <TbSection $w={55}>
      <TbBtn $w={28}><Ico n="pipette" /></TbBtn>
      <TbBtn $w={26}><XIcon size={20} color="#e2453f" strokeWidth={3} /></TbBtn>
    </TbSection>
  </Toolbar>
);

const menu = ["Файл", "Правка", "Выделить", "Вид", "Эскиз", "Моделирование", "Оформление", "Диагностика", "Управление", "Настройка", "Приложения", "Окно", "Справка"];

const App = () => (
  <Window>
    <Global />
    <MenuBar>
      <Logo viewBox="0 0 20 22">
        <rect width="20" height="22" fill="#0f6a80" />
        <circle cx="10" cy="11" r="7.500" fill="#12323e" stroke="#9fd4e0" />
        <text x="10" y="15" textAnchor="middle" fontSize="11" fontFamily="Liberation Sans" fill="#cfeaf0">К</text>
      </Logo>
      <MenuList>
        {menu.map((m) => (
          <MenuItem key={m}>{m}</MenuItem>
        ))}
      </MenuList>
      <Svg viewBox="0 0 16 14" width="16" height="14" $color="#444" style={{ marginRight: 11 }}>
        <path d="M.5.500h15v13H.500zM.5 3.500h15" />
      </Svg>
      <Svg viewBox="0 0 16 14" width="16" height="14" $color="#444">
        <path d="M.5.500h15v13H.500zM.5 3h15" />
        <circle cx="8" cy="8" r="3" fill="currentColor" />
      </Svg>
      <SearchBox>
        <Svg viewBox="0 0 14 14" width="12" height="12" $color="#aaa">
          <circle cx="8.500" cy="5.500" r="4.500" />
          <path d="M5 9l-4 4" />
        </Svg>
        Поиск по командам (Alt+/)
      </SearchBox>
      <WinBtn>
        <Svg viewBox="0 0 12 12" width="12" height="12" $color="#333"><path d="M1 10h10" strokeWidth="2" /></Svg>
      </WinBtn>
      <WinBtn>
        <Svg viewBox="0 0 12 12" width="12" height="12" $color="#333"><path d="M1 2h10v9H1z" strokeWidth="1.300" /></Svg>
      </WinBtn>
      <WinBtn>
        <Svg viewBox="0 0 12 12" width="12" height="12" $color="#333"><path d="M2 2l8 8M10 2l-8 8" strokeWidth="2" /></Svg>
      </WinBtn>
    </MenuBar>

    <TabBar>
      <HomeBtn>
        <Svg viewBox="0 0 14 14" width="14" height="14" $color="#222">
          <path d="M1 6l6-5 6 5v8H9V9H5v5H1z" fill="currentColor" stroke="none" />
        </Svg>
        <Caret $s={3} $c="#555" />
      </HomeBtn>
      <DocTab>
        <Svg viewBox="0 0 16 16" width="15" height="15" $color="#fff">
          <rect x="1" y="1" width="14" height="14" fill="#fff" stroke="none" />
          <circle cx="8" cy="8" r="4.500" fill="none" stroke="#555" strokeWidth="2" />
        </Svg>
        Проушина.m3d
        <TabClose>✕</TabClose>
      </DocTab>
    </TabBar>
    <DarkGap />

    <Ribbon>
      <Group $w={120}>
        <GroupBody>
          <Modes>
            <Mode $active><Ico n="cube" />{"Твердотельное\nмоделирование"}</Mode>
            <Mode><Ico n="frame" />{"Каркас и\nповерхности"}</Mode>
            <Mode><Ico n="sketchTools" />{"Инструменты\nэскиза"}</Mode>
          </Modes>
        </GroupBody>
        <GroupFoot>
          <ChevronFoot>
            <Svg viewBox="0 0 10 10" width="10" height="10" $color="#666">
              <path d="M1 1l4 3 4-3M1 5l4 3 4-3" />
            </Svg>
          </ChevronFoot>
        </GroupFoot>
      </Group>
      <GridGroup w={80} pad={4} caption="Системная" cell={25} cols={3} icons={["doc", "folder", "save", "print", "preview", "saveAs", "undo", "redo"]} />
      <ToolGroup w={121} pad={4} caption="Эскиз" caret cols={[{ w: 116, items: ribbonRows.sketch }]} />
      <ToolGroup
        w={481}
        pad={5}
        caption="Элементы тела"
        caret
        cols={[
          { w: 119, items: [["extrude", "Элемент\nвыдавливания"], ["cut", "Вырезать\nвыдавливанием"], ["fillet", "Скругление"]] },
          { w: 118, items: [["thicken", "Придать\nтолщину"], ["hole", "Отверстие\nпростое"], ["fullFillet", "Полное\nскругление"]] },
          { w: 121, items: [["rib", "Ребро\nжесткости"], ["section", "Сечение"], ["draft", "Уклон"]] },
          { w: 118, items: [["addPart", "Добавить\nдеталь-заготов..."], ["shell", "Оболочка"], ["bool", "Булева\nоперация"]] },
        ]}
      />
      <ToolGroup w={121} pad={4} caption="Прямое моделир..." caret cols={[{ w: 115, items: [["delFace", "Удалить грани"], ["moveFace", "Переместить\nграни"], ["replaceFace", "Заменить грани"]] }]} />
      <ToolGroup w={120} pad={4} caption="Элементы каркаса" caret cols={[{ w: 115, items: [["point", "Точка по\nкоординатам"], ["contour", "Контур"], ["spiral", "Спираль\nцилиндрическ..."]] }]} />
      <ToolGroup w={122} pad={5} caption="Массив, копирование" cols={[{ w: 116, items: [["grid", "Массив по сетке"], ["copyObj", "Копировать\nобъекты"], ["collect", "Коллекция\nгеометрии"]] }]} />
      <GridGroup w={52} pad={1} caption="Вспом..." cell={25} cols={2} size={19} icons={["plane", "sym", "plane2", "sym2", "axis"]} />
      <GridGroup w={53} pad={2} caption="Раз..." caret cell={25} cols={2} size={19} icons={["bracket", "bowl", "faces", "bowl2", "tri", "fold"]} />
      <GridGroup w={79} pad={1} caption="Обознач..." caret cell={26} cols={3} size={19} icons={["pipe", "cyl", "weld", "weldE", "check", "stamp", "base", "tol", "bigT"]} />
      <ToolGroup
        w={242}
        pad={5}
        caption="Диагностика"
        caret
        cols={[
          { w: 120, items: [["info", "Информация об\nобъекте"], ["mutual", "Взаимное\nотклонение"], ["analysis", "Анализ\nотклонений"]] },
          { w: 116, items: [["dist", "Расстояние и\nугол"], ["mch", "МЦХ модели"], ["collide", "Проверка\nколлизий"]] },
        ]}
      />
      <ToolGroup w={121} pad={4} caption="Чертеж" cols={[{ w: 116, items: [["template", "Создать чертеж\nпо шаблону"], ["linked", "Управление\nсвязанными ч..."]] }]} />
      <FillGroup>
        <GroupBody />
        <GroupFoot />
      </FillGroup>
    </Ribbon>

    <Main>
      <Rail>
        <RailBtn><Ico n="tree" /></RailBtn>
        <RailBtn $active><Ico n="params" color="#fff" /></RailBtn>
        <RailBtn><Fx>f<sub style={{ fontSize: 12 }}>x</sub></Fx></RailBtn>
        <RailBtn>
          <Svg viewBox="0 0 20 20" width="18" height="18" $color="#222">
            <path d="M2 3h16M2 10h16M2 17h16" strokeWidth="3.600" strokeLinecap="round" />
          </Svg>
        </RailBtn>
      </Rail>

      <Panel>
        <PanelHead>
          Параметры
          <Settings size={15} color="#333" strokeWidth={2.6} />
        </PanelHead>
        <TitleRow>
          Цилиндр
          <HelpWrap>
            <Help>?</Help>
            <Ico n="tree" size={18} />
          </HelpWrap>
        </TitleRow>
        <TabsRow>
          <PanelTab><Ico n="tabA" /></PanelTab>
          <PanelTab><Ico n="tabB" /></PanelTab>
          <PanelTab $active><Ico n="tabC" color="#fff" /></PanelTab>
          <PanelTab><Ico n="tabD" /></PanelTab>
          <XIcon size={24} color="#e2524c" strokeWidth={3} style={{ marginLeft: "auto" }} />
        </TabsRow>

        <Row $mt={9}>
          <Label $up>{"Результат:\nВычитание"}</Label>
          <Slot $mr={-2.5}><Ico n="resA" size={18} /></Slot>
          <Slot $mr={2}><Ico n="resB" size={18} /></Slot>
          <Slot $mr={-2.5} $active>
            <Ico n="resC" size={18} color="#fff" />
            <Cursor viewBox="0 0 12 19">
              <path d="M1 1v14l3.500-3 2.500 6 2.500-1-2.500-6h4.500z" fill="#fff" stroke="#000" strokeWidth="1" />
            </Cursor>
          </Slot>
          <Slot><Ico n="resD" size={18} /></Slot>
        </Row>

        <Title $mt={15}>Позиция</Title>
        <CoordTable>
          <CoordLabel>Координаты:</CoordLabel>
          {["X", "Y", "Z"].map((a) => (
            <CoordRow key={a}>
              <CoordDot />
              <CoordAxis>{a}</CoordAxis>
              <CoordVal>0</CoordVal>
            </CoordRow>
          ))}
        </CoordTable>

        <DashBox>
          <LinkLabel style={{ width: 117 }}>Точка привязки</LinkLabel>
          <Field $hint>Укажите точку привя...</Field>
          <Dot />
        </DashBox>

        <Title $mt={13} $chev><Chevron />Ориентация</Title>
        <Row $mt={6}>
          <Label $up>{"Способ ориентации:\nНаправление осей"}</Label>
          <Slot $active><Ico n="orientA" color="#fff" /></Slot>
          <Slot><Ico n="orientB" /></Slot>
          <Slot><Ico n="eraser" /></Slot>
        </Row>
        {["Ось X", "Ось Y", "Ось Z"].map((a) => (
          <Row key={a} $mt={4}>
            <LinkLabel>{a}</LinkLabel>
            <Field $w={118} $hint>Укажите объект</Field>
            <Slot $mr={-1}><Ico n="arrowUp" /></Slot>
            <Slot><Ico n="swap" /></Slot>
          </Row>
        ))}

        <Band>
          <BandLabel>Диаметр <Caret /></BandLabel>
          <Field>100</Field>
        </Band>
        <Row $mt={2}>
          <LinkLabel>Диаметр по объекту</LinkLabel>
          <Field $hint>Укажите объект</Field>
        </Row>

        <Title $mt={15}>Высота</Title>
        <Row $mt={6}>
          <Label $up>{"Способ:\nЧерез все"}</Label>
          <Slot><Ico n="byA" /></Slot>
          <Slot $active><Ico n="byB" color="#fff" /></Slot>
          <Slot><Ico n="byC" /></Slot>
        </Row>
        <Row $mt={4}>
          <Label $up>Расстояние</Label>
          <Field $off>0</Field>
          <BackBtn>
            <Svg viewBox="0 0 16 16" width="16" height="16" $color="#fff">
              <path d="M15 8H2M6 4L2 8l4 4" strokeWidth="2" />
            </Svg>
          </BackBtn>
        </Row>
        <Row $mt={13} $h={22}>
          <Label>Второе направление:</Label>
          <Toggle><ToggleOff /><ToggleKnob /></Toggle>
        </Row>

        <Bar $mt={22} $chev><Chevron down />Область применения</Bar>
        <Bar $chev><Chevron down />Система координат</Bar>
        <Bar $chev><Chevron />Свойства</Bar>
        <Row $mt={4}>
          <Label $up>Наименование:</Label>
          <Field>Цилиндр</Field>
        </Row>
        <Title $mt={14} $chev><Chevron />Отображение</Title>
        <Row $mt={6}>
          <Label $up>Способ задания:</Label>
          <SelectField>
            <Ico n="source" size={17} />
            По источнику
            <Caret style={{ marginLeft: "auto" }} />
          </SelectField>
        </Row>

        <Hint>
          <HelpBubble viewBox="0 0 13 13">
            <path d="M0 1h12v8H8l-2 3V9H0z" fill="#222" />
          </HelpBubble>
          <span>
            Задайте положение относительно текущей СК
            <br />
            или укажите объект для создания
            <br />
            ассоциативной связи
          </span>
          <HintClose>✕</HintClose>
        </Hint>
      </Panel>

      <Canvas>
        <ViewBar />
        <Model />
      </Canvas>
    </Main>
  </Window>
);

export default App;
